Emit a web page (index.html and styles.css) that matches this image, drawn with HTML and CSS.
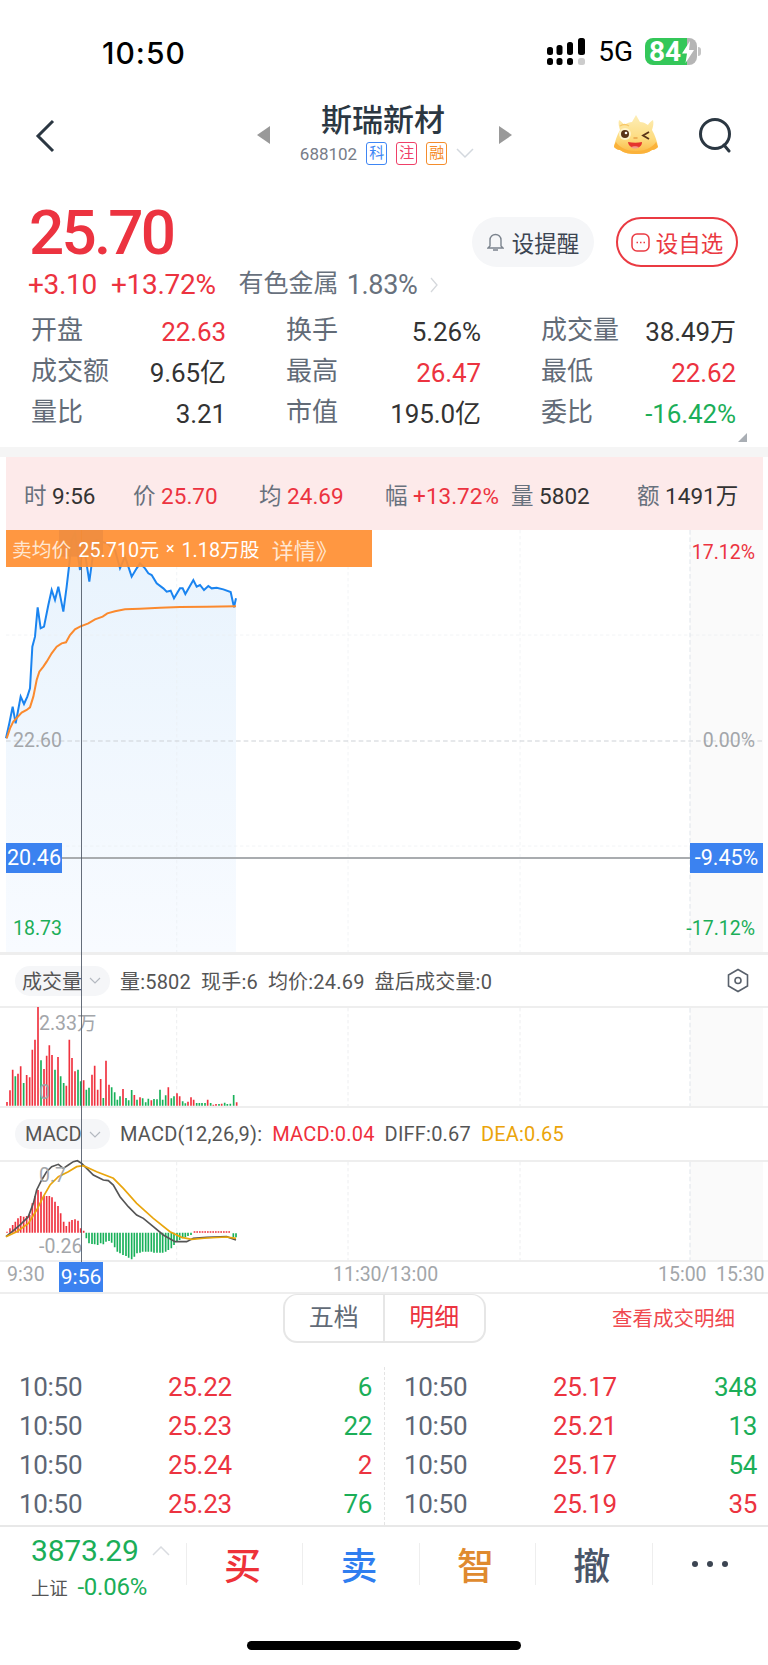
FILE: index.html
```html
<!DOCTYPE html>
<html lang="en">
<head>
    <meta charset="UTF-8">
    <meta name="viewport" content="width=device-width, initial-scale=1.0">
    <title>斯瑞新材</title>
    <link rel="stylesheet" href="styles.css">
</head>
<body>
    <div class="status-bar">
        <span class="clock">10:50</span>
        <div class="status-right">
            <svg class="signal" width="40" height="28" viewBox="0 0 40 28">
                <g fill="#000">
                    <rect x="1" y="9" width="6" height="8" rx="2.5"/>
                    <rect x="10.500" y="7" width="6" height="10" rx="2.5"/>
                    <rect x="21" y="4" width="6" height="13" rx="2.5"/>
                    <rect x="32" y="0" width="7" height="17" rx="2.5"/>
                    <rect x="1" y="20" width="6" height="7" rx="2.5"/>
                    <rect x="10.500" y="20" width="6" height="7" rx="2.5"/>
                    <rect x="21" y="20" width="6" height="7" rx="2.5"/>
                </g>
                <rect x="32" y="20" width="7" height="7" rx="2.5" fill="#ccc"/>
            </svg>
            <span class="network">5G</span>
            <div class="battery">
                <span class="battery-num">84</span>
                <svg class="bolt" width="14" height="22" viewBox="0 0 14 22"><path d="M9 0 1 12.500h5L4.500 22 13 9H8z" fill="#fff"/></svg>
            </div>
            <span class="battery-cap"></span>
        </div>
    </div>

    <div class="nav">
        <svg class="back" width="20" height="34" viewBox="0 0 20 34"><path d="M18 2 3 17l15 15" fill="none" stroke="#2b3742" stroke-width="3"/></svg>
        <svg class="arrow arrow-left" width="14" height="18" viewBox="0 0 14 18"><path d="M13 0v18L0 9z" fill="#999"/></svg>
        <div class="nav-title">
            <div class="stock-name">斯瑞新材</div>
            <div class="stock-code">
                <span class="code">688102</span>
                <span class="tag tag-blue">科</span>
                <span class="tag tag-pink">注</span>
                <span class="tag tag-orange">融</span>
                <svg width="18" height="11" viewBox="0 0 18 11"><path d="M1 1l8 8 8-8" fill="none" stroke="#d3d8de" stroke-width="1.500"/></svg>
            </div>
        </div>
        <svg class="arrow arrow-right" width="14" height="18" viewBox="0 0 14 18"><path d="M1 0v18l13-9z" fill="#999"/></svg>
        <svg class="mascot" width="46" height="40" viewBox="0 0 46 40">
            <defs>
                <linearGradient id="skin" x1="0" y1="0" x2="0" y2="1">
                    <stop offset="0" stop-color="#fdeeb8"/>
                    <stop offset="0.6" stop-color="#fddc80"/>
                    <stop offset="1" stop-color="#fbb63f"/>
                </linearGradient>
            </defs>
            <path d="M6 6c2 1 4 3 5 5 3-2 6-3 8-3l4-7 4 7c3 0 5 1 8 3 1-2 3-4 5-5 1 3 0 7-1 10 3 5 5 11 6 17-2 2-4 3-6 3-4 3-10 4-16 4S11 39 7 36c-2 0-4-1-6-3 1-6 3-12 6-17-1-3-2-7-1-10z" fill="url(#skin)"/>
            <path d="M1 33c2 2 4 3 6 3 4 3 10 4 16 4s12-1 16-4c2 0 4-1 6-3-1-2-1-3-2-5-2 4-9 9-20 9S5 32 3 28c-1 2-2 3-2 5z" fill="#fbb23a"/>
            <ellipse cx="12" cy="20" rx="6" ry="6" fill="#fff3c9"/>
            <circle cx="12" cy="20" r="4" fill="#5a3418"/>
            <circle cx="13" cy="19" r="1.300" fill="#fff"/>
            <path d="M7 12c3-2 6-2 9 0" fill="none" stroke="#f7c86a" stroke-width="1.500"/>
            <path d="M36 18l-6 3.500 6 3.500" fill="none" stroke="#5a3418" stroke-width="1.800"/>
            <path d="M21 24h3" stroke="#e9a34a" stroke-width="1.500" stroke-linecap="round"/>
            <path d="M15 28c5 1 10 1 14 0 0 8-13 8-14 0z" fill="#e5352d"/>
            <path d="M18 33c2-1 6-1 8 0-2 2-6 2-8 0z" fill="#f59a8a"/>
        </svg>
        <svg class="search" width="36" height="36" viewBox="0 0 36 36"><circle cx="17" cy="17" r="14.500" fill="none" stroke="#2b3742" stroke-width="3"/><path d="M26 28l5 6" stroke="#2b3742" stroke-width="3" stroke-linecap="round"/></svg>
    </div>

    <div class="quote">
        <div class="quote-head">
            <div class="quote-main">
                <div class="last-price">25.70</div>
                <div class="change-row">
                    <span class="up">+3.10</span>
                    <span class="up change-pct">+13.72%</span>
                    <span class="sector">有色金属</span>
                    <span class="sector-pct">1.83%</span>
                    <svg width="9" height="16" viewBox="0 0 9 16"><path d="M1 1l6 7-6 7" fill="none" stroke="#d5d8dc" stroke-width="1.300"/></svg>
                </div>
            </div>
            <div class="quote-actions">
                <button class="pill pill-grey">
                    <svg width="17" height="20" viewBox="0 0 17 20"><path d="M3 14V8a5.500 5.500 0 0 1 11 0v6l2 2H1zM6 18h5" fill="none" stroke="#7b838d" stroke-width="1.400"/></svg>
                    设提醒
                </button>
                <button class="pill pill-red">
                    <svg width="19" height="19" viewBox="0 0 19 19"><rect x="1" y="1" width="17" height="17" rx="5" fill="none" stroke="#ea3a42" stroke-width="1.500"/><path d="M5.500 9.500h1.500M9 9.500h1.500M12.500 9.500H14" stroke="#ea3a42" stroke-width="1.500"/></svg>
                    设自选
                </button>
            </div>
        </div>
        <div class="stats">
            <div class="stat"><span class="stat-label">开盘</span><span class="up">22.63</span></div>
            <div class="stat"><span class="stat-label">换手</span><span>5.26%</span></div>
            <div class="stat"><span class="stat-label">成交量</span><span>38.49万</span></div>
            <div class="stat"><span class="stat-label">成交额</span><span>9.65亿</span></div>
            <div class="stat"><span class="stat-label">最高</span><span class="up">26.47</span></div>
            <div class="stat"><span class="stat-label">最低</span><span class="up">22.62</span></div>
            <div class="stat"><span class="stat-label">量比</span><span>3.21</span></div>
            <div class="stat"><span class="stat-label">市值</span><span>195.0亿</span></div>
            <div class="stat"><span class="stat-label">委比</span><span class="down">-16.42%</span></div>
        </div>
        <span class="corner"></span>
    </div>

    <div class="band"></div>

    <div class="tick-bar">
        <div><span class="tick-label">时</span> 9:56</div>
        <div><span class="tick-label">价</span> <span class="up">25.70</span></div>
        <div><span class="tick-label">均</span> <span class="up">24.69</span></div>
        <div><span class="tick-label">幅</span> <span class="up">+13.72%</span></div>
        <div><span class="tick-label">量</span> 5802</div>
        <div><span class="tick-label">额</span> 1491万</div>
    </div>

    <div class="charts">
        <div class="price-chart">
            <svg class="plot" width="768" height="422" viewBox="0 30 2304 1266">
                <defs>
                    <linearGradient id="area" x1="0" y1="0" x2="0" y2="1">
                        <stop offset="0" stop-color="#e8f3fd"/>
                        <stop offset="1" stop-color="#f8fbff"/>
                    </linearGradient>
                </defs>
                <rect x="2070" y="30" width="219" height="1266" fill="#fafafa"/>
                <path d="M18 655L28 610 38 560 47 610 62 530 72 552 82 530 90 505 97 380 105 350 113 262 122 325 132 320 145 255 155 210 165 240 175 200 190 275 200 200 207 140 215 60 225 40 240 150 250 60 258 120 268 185 278 110 290 60 320 70 345 90 360 145 375 110 395 170 410 145 420 130 435 145 445 160 455 165 470 190 490 205 500 215 512 212 522 235 540 205 548 205 556 222 580 180 590 200 600 195 612 210 625 198 635 205 650 203 670 208 692 216 702 262 708 235V1296H18z" fill="url(#area)"/>
                <g fill="none" stroke="#eceef1" stroke-width="2" stroke-dasharray="10 8">
                    <path d="M530 30V1296M1044 30V1296M1560 30V1296M18 345H2289M18 978H2289"/>
                </g>
                <path d="M2070 30V1296" stroke="#dfe4ea" stroke-width="3" stroke-dasharray="14 8"/>
                <path d="M18 663H2289" stroke="#cdd1d6" stroke-width="3" stroke-dasharray="14 9"/>
                <rect x="177" y="30" width="132" height="80" fill="#3b82f0"/>
                <path d="M18 655L28 610 38 560 47 610 62 530 72 552 82 530 90 505 97 380 105 350 113 262 122 325 132 320 145 255 155 210 165 240 175 200 190 275 200 200 207 140 215 60 225 40 240 150 250 60 258 120 268 185 278 110 290 60 320 70 345 90 360 145 375 110 395 170 410 145 420 130 435 145 445 160 455 165 470 190 490 205 500 215 512 212 522 235 540 205 548 205 556 222 580 180 590 200 600 195 612 210 625 198 635 205 650 203 670 208 692 216 702 262 708 235" fill="none" stroke="#1a84f0" stroke-width="6"/>
                <path d="M20 655L30 625 40 605 52 592 65 578 80 570 90 562 100 530 110 480 118 455 130 440 140 425 155 400 170 380 185 370 198 367 210 345 225 328 240 320 265 310 285 298 308 290 322 280 345 274 375 268 420 266 480 263 540 261 620 260 708 259" fill="none" stroke="#fb8a2e" stroke-width="6"/>
                <path d="M186 1014H2070" stroke="#a9acaf" stroke-width="6"/>
            </svg>
            <div class="sell-banner">
                <span class="sell-label">卖均价</span>
                <span>25.710元</span>
                <span class="sell-times">×</span>
                <span>1.18万股</span>
                <span class="sell-label sell-link">详情》</span>
            </div>
            <span class="axis axis-top-right up">17.12%</span>
            <span class="axis axis-left axis-mid">22.60</span>
            <span class="axis axis-right axis-mid">0.00%</span>
            <span class="axis axis-left axis-low down">18.73</span>
            <span class="axis axis-right axis-low down">-17.12%</span>
            <span class="cross-tag cross-left">20.46</span>
            <span class="cross-tag cross-right">-9.45%</span>
        </div>

        <div class="panel-head">
            <div class="panel-tab">成交量<svg width="12" height="7" viewBox="0 0 12 7"><path d="M1 1l5 5 5-5" fill="none" stroke="#b4b9c0" stroke-width="1.200"/></svg></div>
            <span>量:5802</span>
            <span>现手:6</span>
            <span>均价:24.69</span>
            <span>盘后成交量:0</span>
            <svg class="settings" width="22" height="25" viewBox="0 0 22 25"><path d="M11 1.500l9.500 5.500v11L11 23.500 1.500 18V7z" fill="none" stroke="#59616c" stroke-width="1.600"/><circle cx="11" cy="12.500" r="3" fill="none" stroke="#59616c" stroke-width="1.600"/></svg>
        </div>

        <div class="volume-plot">
            <svg class="plot" width="768" height="98" viewBox="0 175 2304 294">
                <rect x="2070" y="175" width="219" height="294" fill="#fafafa"/>
                <path d="M530 175V469M1044 175V469M1560 175V469" stroke="#e4e6e9" stroke-width="2" stroke-dasharray="10 8"/>
                <path d="M2070 175V469" stroke="#dfe4ea" stroke-width="3" stroke-dasharray="14 8"/>
                <path stroke="#f0323f" stroke-width="5" d="M21 468V457M30 468V422M38 468V360M54 468V372M62 468V350M80 468V376M89 468V383M97 468V300M105 468V270M114 468V172M132 468V358M140 468V318M148 468V287M156 468V316M174 468V322M199 468V408M208 468V270M216 468V325M225 468V365M251 468V392M276 468V375M284 468V348M293 468V420M302 468V388M318 468V333M327 468V405M369 468V418M403 468V436M420 468V443M454 468V452M505 468V413M531 468V431M539 468V440M564 468V456M573 468V443M581 468V450M623 468V450M640 468V465M648 468V463M665 468V462M710 468V458"/>
                <path stroke="#19b15a" stroke-width="5" d="M46 468V380M71 468V400M123 468V332M165 468V360M182 468V380M191 468V400M234 468V360M242 468V395M259 468V420M267 468V414M310 468V445M335 468V413M344 468V428M352 468V450M360 468V440M378 468V445M386 468V452M395 468V421M411 468V450M428 468V446M437 468V458M445 468V447M462 468V448M471 468V449M480 468V420M488 468V450M497 468V437M514 468V446M522 468V440M548 468V455M556 468V461M590 468V460M598 468V460M606 468V460M615 468V460M632 468V460M657 468V463M674 468V459M682 468V463M691 468V462M701 468V436"/>
            </svg>
            <span class="axis vol-max">2.33万</span>
            <span class="axis vol-zero">0</span>
        </div>

        <div class="panel-head panel-head-macd">
            <div class="panel-tab">MACD<svg width="12" height="7" viewBox="0 0 12 7"><path d="M1 1l5 5 5-5" fill="none" stroke="#b4b9c0" stroke-width="1.200"/></svg></div>
            <span>MACD(12,26,9):</span>
            <span class="macd-val">MACD:0.04</span>
            <span>DIFF:0.67</span>
            <span class="dea-val">DEA:0.65</span>
        </div>

        <div class="macd-plot">
            <svg class="plot" width="768" height="98" viewBox="0 156 2304 294">
                <rect x="2070" y="156" width="219" height="294" fill="#fafafa"/>
                <path d="M530 156V450M1044 156V450M1560 156V450" stroke="#e4e6e9" stroke-width="2" stroke-dasharray="10 8"/>
                <path d="M2070 156V450" stroke="#dfe4ea" stroke-width="3" stroke-dasharray="14 8"/>
                <path stroke="#f0323f" stroke-width="5" d="M21 368V365M30 368V355M38 368V345M46 368V335M54 368V325M62 368V318M71 368V320M80 368V318M89 368V315M97 368V280M105 368V258M114 368V240M123 368V245M132 368V258M140 368V258M148 368V258M156 368V262M165 368V275M174 368V288M182 368V310M191 368V335M199 368V348M208 368V335M216 368V330M225 368V328M234 368V332M242 368V355M251 368V362"/>
                <path stroke="#19b15a" stroke-width="5" d="M259 368V385M267 368V400M276 368V402M284 368V403M293 368V405M302 368V400M310 368V403M318 368V395M327 368V393M335 368V398M344 368V412M352 368V425M360 368V430M369 368V435M378 368V438M386 368V443M395 368V448M403 368V440M411 368V430M420 368V428M428 368V425M437 368V425M445 368V425M454 368V425M462 368V428M471 368V428M480 368V428M488 368V428M497 368V425M505 368V420M514 368V415M522 368V405M531 368V395M539 368V390M548 368V385M556 368V382M564 368V378M573 368V375M700 370V382M708 370V382"/>
                <path d="M581 366H690" stroke="#f0323f" stroke-width="4" stroke-dasharray="5 3"/>
                <path d="M18 380L40 362 60 345 85 320 100 280 110 240 125 210 140 185 155 170 175 163 190 175 205 165 220 155 232 152 245 160 260 175 280 195 310 210 325 212 340 225 360 260 385 290 410 315 430 325 460 350 490 375 525 395 560 395 580 385 620 382 680 380 708 390" fill="none" stroke="#555" stroke-width="5"/>
                <path d="M18 380L50 365 85 340 110 300 130 260 150 225 175 200 205 185 230 170 250 167 290 185 340 205 370 235 410 280 460 325 510 365 545 382 575 388 620 384 680 381 708 385" fill="none" stroke="#e9a50d" stroke-width="5"/>
            </svg>
            <span class="axis macd-max">0.7</span>
            <span class="axis macd-min">-0.26</span>
        </div>

        <div class="time-axis">
            <span class="time-start">9:30</span>
            <span class="time-cross">9:56</span>
            <span class="time-mid">11:30/13:00</span>
            <span class="time-end">15:00</span>
            <span class="time-last">15:30</span>
        </div>
        <span class="crosshair"></span>
    </div>

    <div class="trade-tabs">
        <div class="segment">
            <span class="segment-item">五档</span>
            <span class="segment-item segment-on">明细</span>
        </div>
        <span class="trade-link">查看成交明细</span>
    </div>

    <div class="trades">
        <div class="trade-col">
            <div class="trade"><span class="trade-time">10:50</span><span class="up">25.22</span><span class="down">6</span></div>
            <div class="trade"><span class="trade-time">10:50</span><span class="up">25.23</span><span class="down">22</span></div>
            <div class="trade"><span class="trade-time">10:50</span><span class="up">25.24</span><span class="up">2</span></div>
            <div class="trade"><span class="trade-time">10:50</span><span class="up">25.23</span><span class="down">76</span></div>
        </div>
        <div class="trade-col trade-col-right">
            <div class="trade"><span class="trade-time">10:50</span><span class="up">25.17</span><span class="down">348</span></div>
            <div class="trade"><span class="trade-time">10:50</span><span class="up">25.21</span><span class="down">13</span></div>
            <div class="trade"><span class="trade-time">10:50</span><span class="up">25.17</span><span class="down">54</span></div>
            <div class="trade"><span class="trade-time">10:50</span><span class="up">25.19</span><span class="up">35</span></div>
        </div>
    </div>

    <div class="bottom-bar">
        <div class="index-box">
            <div class="index-top">
                <span class="index-value">3873.29</span>
                <svg width="18" height="10" viewBox="0 0 18 10"><path d="M1 9l8-8 8 8" fill="none" stroke="#d9dce0" stroke-width="1.500"/></svg>
            </div>
            <div class="index-sub"><span class="index-name">上证</span> <span class="down">-0.06%</span></div>
        </div>
        <div class="action action-buy">买</div>
        <div class="action action-sell">卖</div>
        <div class="action action-smart">智</div>
        <div class="action action-cancel">撤</div>
        <div class="action action-more"><i></i><i></i><i></i></div>
    </div>

    <div class="home-wrap"><span class="home-bar"></span></div>
</body>
</html>
```

FILE: styles.css
```css
* {
    margin: 0;
    padding: 0;
    box-sizing: border-box;
}

body {
    width: 768px;
    height: 1665px;
    overflow: hidden;
    background: white;
    font-family: Roboto, "Noto Sans CJK SC", sans-serif;
    color: #333;
}

.up {
    color: #ec3340;
}

.down {
    color: #1bae58;
}

/* status bar */
.status-bar {
    height: 88px;
    display: flex;
    justify-content: space-between;
    padding: 38px 67px 0 102px;
}

.clock {
    font-family: Inter, sans-serif;
    font-size: 30px;
    font-weight: 500;
    line-height: 30px;
    letter-spacing: 1px;
    color: #000;
}

.status-right {
    display: flex;
    align-items: flex-start;
}

.network {
    font-size: 28px;
    line-height: 28px;
    margin: 0 12px 0 12px;
    color: #000;
}

.battery {
    position: relative;
    width: 52px;
    height: 27px;
    border-radius: 8px;
    background: linear-gradient(to right, #34c759 80%, #b5b5b5 80%);
}

.battery-num {
    position: absolute;
    left: 4px;
    top: 0;
    font-size: 28px;
    font-weight: 700;
    line-height: 27px;
    color: white;
}

.bolt {
    position: absolute;
    left: 36px;
    top: 3px;
}

.battery-cap {
    width: 3px;
    height: 9px;
    margin: 9px 0 0 1px;
    border-radius: 0 3px 3px 0;
    background: #c4c4c4;
}

/* nav */
.nav {
    position: relative;
    height: 102px;
}

.back {
    position: absolute;
    left: 35px;
    top: 31px;
}

.arrow {
    position: absolute;
    top: 38px;
}

.arrow-left {
    left: 257px;
}

.arrow-right {
    left: 498px;
}

.nav-title {
    display: flex;
    flex-direction: column;
    align-items: center;
    padding: 14px 0 0 0;
}

.stock-name {
    font-size: 31px;
    font-weight: 500;
    line-height: 38px;
    color: #2b3742;
    margin-left: -2px;
}

.stock-code {
    display: flex;
    align-items: center;
    gap: 9px;
    margin: 2px 0 0 6px;
    height: 23px;
}

.code {
    font-size: 17px;
    color: #777c88;
}

.tag {
    width: 21px;
    height: 23px;
    border: 1.5px solid;
    border-radius: 3px;
    font-size: 15px;
    line-height: 20px;
    text-align: center;
}

.tag-blue {
    color: #3d86f5;
}

.tag-pink {
    color: #ef4068;
}

.tag-orange {
    color: #f58d2b;
}

.mascot {
    position: absolute;
    left: 613px;
    top: 26px;
}

.search {
    position: absolute;
    left: 698px;
    top: 29px;
}

/* quote */
.quote {
    position: relative;
    height: 257px;
}

.quote-head {
    height: 121px;
    display: flex;
    justify-content: space-between;
    padding: 0 30px 0 28px;
}

.last-price {
    font-size: 62px;
    font-weight: 500;
    line-height: 70px;
    letter-spacing: -2.8px;
    color: #ec3340;
    margin: 8px 0 0 1px;
}

.change-row {
    display: flex;
    align-items: center;
    font-size: 28px;
    line-height: 30px;
    letter-spacing: -0.3px;
    margin-top: 2px;
}

.change-pct {
    margin-left: 14px;
}

.sector {
    margin: -3px 8px 0 23px;
    font-size: 25px;
    letter-spacing: 0;
    color: #68717d;
}

.sector-pct {
    margin-right: 12px;
    font-size: 27px;
    color: #68717d;
}

.quote-actions {
    display: flex;
    gap: 22px;
    padding-top: 27px;
}

.pill {
    width: 122px;
    height: 50px;
    display: flex;
    align-items: center;
    justify-content: center;
    gap: 8px;
    border: none;
    border-radius: 25px;
    font-family: inherit;
    font-size: 22.5px;
}

.pill-grey {
    background: #f5f6f8;
    color: #3c4552;
}

.pill-red {
    background: white;
    border: 2px solid #ea3a42;
    color: #ea3a42;
    gap: 6px;
}

.stats {
    display: grid;
    grid-template-columns: repeat(3, 195px);
    column-gap: 60px;
    grid-auto-rows: 41px;
    padding: 0 32px 0 31px;
    font-size: 26px;
    letter-spacing: -0.1px;
}

.stat {
    display: flex;
    justify-content: space-between;
    align-items: center;
}

.stat span {
    height: 30px;
    line-height: 30px;
}

.stat .stat-label {
    font-size: 26px;
    letter-spacing: 0;
    color: #626b77;
    margin-top: -3px;
}

.corner {
    position: absolute;
    right: 21px;
    bottom: 5px;
    width: 0;
    height: 0;
    border-left: 9px solid transparent;
    border-bottom: 9px solid #a9aeb4;
}

.band {
    height: 10px;
    background: #f5f5f5;
}

/* tick bar */
.tick-bar {
    height: 73px;
    margin: 0 5px 0 6px;
    padding-left: 18px;
    display: grid;
    grid-template-columns: 109px 126px 126px 126px 126px auto;
    align-items: center;
    background: #fdeaea;
    font-size: 22.5px;
}

.tick-label {
    color: #68717d;
}

/* charts */
.charts {
    position: relative;
}

.plot {
    position: absolute;
    left: 0;
    top: 0;
    overflow: visible;
}

.crosshair {
    position: absolute;
    left: 81px;
    top: 0;
    width: 1px;
    height: 732px;
    background: rgba(75, 85, 99, 0.85);
    z-index: 1;
}

.price-chart {
    position: relative;
    height: 425px;
    border-bottom: 3px solid #eeeeee;
}

.sell-banner {
    position: absolute;
    left: 6px;
    top: 0;
    width: 366px;
    height: 37px;
    display: flex;
    align-items: center;
    gap: 7px;
    padding-left: 6px;
    background: rgba(255, 143, 51, 0.93);
    color: white;
    font-size: 19.8px;
    z-index: 2;
}

.sell-label {
    color: #ffe6d0;
}

.sell-times {
    font-size: 16px;
}

.sell-link {
    margin-left: 5px;
    font-size: 22px;
}

.axis {
    position: absolute;
    font-size: 19.5px;
    line-height: 22px;
    color: #a3a6aa;
}

.axis.up {
    color: #ec3340;
}

.axis.down {
    color: #1bae58;
}

.axis-top-right {
    right: 13px;
    top: 12px;
}

.axis-left {
    left: 13px;
}

.axis-right {
    right: 13px;
}

.axis-mid {
    top: 200px;
}

.axis-low {
    top: 388px;
}

.cross-tag {
    position: absolute;
    top: 313px;
    height: 30px;
    background: #3b82f0;
    color: white;
    font-size: 21.5px;
    line-height: 30px;
    text-align: center;
}

.cross-left {
    left: 6px;
    width: 56px;
}

.cross-right {
    left: 690px;
    width: 73px;
}

.panel-head {
    position: relative;
    height: 53px;
    display: flex;
    align-items: center;
    gap: 10px;
    padding-left: 15px;
    font-size: 20px;
    letter-spacing: 0.2px;
    color: #555;
    border-bottom: 2px solid #eeeeee;
    background: white;
}

.panel-head-macd {
    height: 56px;
    border-top: 2px solid #eeeeee;
}

.macd-val {
    color: #ef2f3c;
}

.dea-val {
    color: #eba40a;
}

.panel-tab {
    width: 95px;
    height: 30px;
    display: flex;
    align-items: center;
    justify-content: space-between;
    padding: 0 9px 0 7px;
    border-radius: 15px;
    background: #f5f6f8;
    letter-spacing: 0;
    font-size: 20px;
}

.panel-head-macd .panel-tab {
    padding-left: 10px;
}

.settings {
    position: absolute;
    left: 727px;
    top: 13px;
}

.volume-plot,
.macd-plot {
    position: relative;
    height: 98px;
}

.vol-max {
    left: 39px;
    top: 5px;
}

.vol-zero {
    left: 39px;
    top: 74px;
}

.macd-max {
    left: 39px;
    top: 3px;
}

.macd-min {
    left: 39px;
    top: 74px;
}

.time-axis {
    position: relative;
    height: 34px;
    display: flex;
    align-items: center;
    border-top: 2px solid #eeeeee;
    border-bottom: 2px solid #eeeeee;
    font-size: 19.5px;
    color: #a3a6aa;
    padding-left: 7px;
}

.time-start,
.time-mid,
.time-end,
.time-last {
    margin-top: -6px;
}

.time-start {
    width: 52px;
}

.time-cross {
    width: 44px;
    height: 30px;
    line-height: 30px;
    text-align: center;
    background: #3b82f0;
    color: white;
    font-size: 21px;
    position: relative;
    z-index: 2;
}

.time-mid {
    margin-left: 230px;
    width: 325px;
}

.time-end {
    width: 58px;
}

/* trades */
.trade-tabs {
    position: relative;
    height: 68px;
    display: flex;
    justify-content: center;
}

.segment {
    width: 203px;
    height: 49px;
    display: flex;
    border: 2px solid #e6e6e6;
    border-top-width: 1px;
    border-radius: 14px;
    font-size: 25px;
    color: #626b77;
}

.segment-item {
    flex: 1;
    line-height: 46px;
    text-align: center;
}

.segment-on {
    color: #ec3340;
    border-left: 2px solid #e6e6e6;
}

.trade-link {
    position: absolute;
    left: 612px;
    top: 11px;
    font-size: 20.5px;
    line-height: 28px;
    color: #f0494f;
}

.trades {
    display: flex;
    height: 163px;
    padding-top: 5px;
}

.trade-col {
    width: 384px;
    padding: 0 12px 0 19px;
}

.trade-col-right {
    padding: 0 11px 0 19px;
    border-left: 1px dashed #e4e4e4;
}

.trade {
    height: 39px;
    display: grid;
    grid-template-columns: 149px 1fr auto;
    align-items: center;
    font-size: 26px;
    letter-spacing: -0.3px;
}

.trade-time {
    color: #5d6674;
}

/* bottom */
.bottom-bar {
    height: 116px;
    display: flex;
    border-top: 2px solid #e8e8e8;
}

.index-box {
    width: 186px;
    padding: 6px 0 0 31px;
}

.index-top {
    display: flex;
    align-items: center;
    gap: 13px;
}

.index-value {
    font-size: 30px;
    line-height: 36px;
    letter-spacing: -0.2px;
    color: #1bae58;
}

.index-sub {
    font-size: 24px;
    line-height: 36px;
    letter-spacing: -0.2px;
}

.index-name {
    font-size: 18.5px;
    color: #555;
    margin-right: 4px;
}

.action {
    position: relative;
    width: 116.5px;
    height: 42px;
    margin-top: 16px;
    padding-right: 4px;
    display: flex;
    align-items: center;
    justify-content: center;
    border-left: 1px solid #eeeeee;
    font-size: 37px;
    font-weight: 500;
}

.action-buy {
    color: #ee3239;
}

.action-sell {
    color: #2f7ef0;
}

.action-smart {
    color: #df8a2e;
}

.action-cancel {
    color: #4a5568;
}

.action-more {
    gap: 9px;
    padding-right: 0;
}

.action-more i {
    width: 6px;
    height: 6px;
    border-radius: 50%;
    background: #3c4552;
}

.home-wrap {
    display: flex;
    justify-content: center;
}

.home-bar {
    width: 274px;
    height: 9px;
    border-radius: 5px;
    background: #000;
}
```
